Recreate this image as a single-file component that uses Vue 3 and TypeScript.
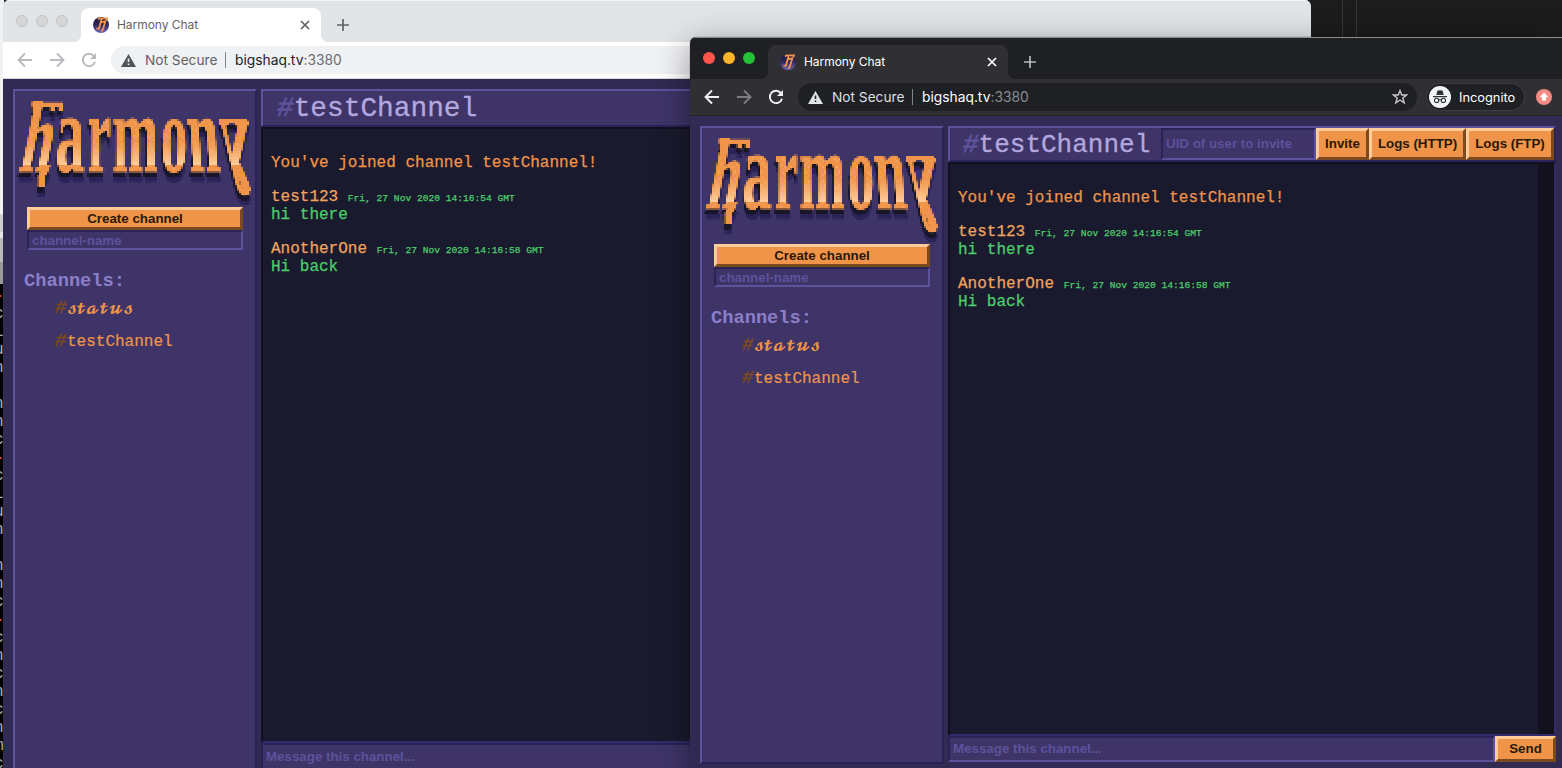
<script setup lang="ts">
interface BrowserWindow {
  id: string
  dark: boolean
}

interface Message {
  author: string
  date: string
  text: string
}

interface LogoLetter {
  char: string
  x: number
  y: number
  size: number
  scale: number
  skew: number
}

const windows: BrowserWindow[] = [
  { id: 'regular', dark: false },
  { id: 'incognito', dark: true },
]

const messages: Message[] = [
  { author: 'test123', date: 'Fri, 27 Nov 2020 14:16:54 GMT', text: 'hi there' },
  { author: 'AnotherOne', date: 'Fri, 27 Nov 2020 14:16:58 GMT', text: 'Hi back' },
]

const channels = ['𝓼𝓽𝓪𝓽𝓾𝓼', 'testChannel']

const letters: LogoLetter[] = [
  { char: 'h', x: 17, y: 171, size: 100, scale: 0.57, skew: -11 },
  { char: 'a', x: 55, y: 171, size: 112, scale: 0.52, skew: 0 },
  { char: 'r', x: 87, y: 171, size: 112, scale: 0.47, skew: 0 },
  { char: 'm', x: 112, y: 171, size: 112, scale: 0.49, skew: 0 },
  { char: 'o', x: 160, y: 171, size: 111, scale: 0.49, skew: 0 },
  { char: 'n', x: 189, y: 171, size: 112, scale: 0.51, skew: 4 },
  { char: 'y', x: 250, y: 171, size: 110, scale: -0.56, skew: 1 },
]

const terminal = [
  '-', 'c', 'L', 'u', 'n', '', 'n', 'n', 'c',
  '-', 'c', 'L', 'u', 'n', '', 'n', 'n', 'c',
  '-', 'c', 'n', 'c', 'n', 'c', 'n', 'm', 'c',
]

function letterTransform(l: LogoLetter): string {
  return `translate(0 ${l.y}) skewX(${l.skew}) scale(${l.scale} 1) translate(0 ${-l.y})`
}
</script>

<template>
  <div class="desktop">
    <div class="backdrop">
      <div class="terminal">
        <span v-for="(t, i) in terminal" :key="i" :class="{ red: t === '-' }">{{ t }}</span>
      </div>
      <div class="editor"></div>
    </div>

    <section v-for="w in windows" :key="w.id" class="window" :class="[w.id, { dark: w.dark }]">
      <div class="tabstrip">
        <div class="lights"><i class="close"></i><i class="min"></i><i class="max"></i></div>
        <div class="tab">
          <svg class="favicon" viewBox="0 0 16 16">
            <defs>
              <linearGradient id="fav" x1="0" y1="0" x2="0" y2="1">
                <stop offset="0" stop-color="#1c1838" />
                <stop offset="0.5" stop-color="#30275f" />
                <stop offset="1" stop-color="#7468b8" />
              </linearGradient>
            </defs>
            <circle cx="8" cy="8" r="8" fill="url(#fav)" />
            <path d="M5 2.6L6.2 1.4H14L13.2 3.2M8.6 2L6 11.6H3.4M7.6 5.6L12.4 4.2L10 12L8.4 14.4" fill="none" stroke="#ef9448" stroke-width="1.8" />
          </svg>
          <span class="tabname">Harmony Chat</span>
          <svg class="x" viewBox="0 0 10 10"><path d="M1 1L9 9M9 1L1 9" /></svg>
        </div>
        <svg class="plus" viewBox="0 0 12 12"><path d="M6 0V12M0 6H12" /></svg>
      </div>
      <div class="toolbar">
        <svg class="nav back" viewBox="0 0 16 16"><path d="M15 8H2M8 1.5L1.5 8L8 14.5" /></svg>
        <svg class="nav fwd" viewBox="0 0 16 16"><path d="M1 8H14M8 1.5L14.5 8L8 14.5" /></svg>
        <svg class="nav reload" viewBox="0 0 16 16">
          <path d="M13.2 4.4A6.2 6.2 0 1 0 14 9.7" />
          <path class="solid" d="M15 1V7H9Z" />
        </svg>
        <div class="omnibox">
          <svg class="warn" viewBox="0 0 15 13">
            <path d="M7.5 0L15 13H0Z" /><path class="mark" d="M7.5 4.6V8M7.5 9.4V11.1" />
          </svg>
          <span class="secure">Not Secure</span>
          <span class="bar"></span>
          <span class="url"><b>bigshaq.tv</b>:3380</span>
          <svg v-if="w.dark" class="star" viewBox="0 0 16 16">
            <path d="M8 1.6L9.8 6H14.6L10.8 9L12.2 13.8L8 11L3.8 13.8L5.2 9L1.4 6H6.2Z" />
          </svg>
        </div>
        <template v-if="w.dark">
          <div class="chip">
            <svg viewBox="0 0 22 22">
              <circle cx="11" cy="11" r="11" fill="#f1f3f4" />
              <path d="M7.2 9L8.5 4.6Q9 4 11 4.6Q13 4 13.5 4.6L14.8 9Z" fill="#303134" />
              <path d="M4 10.7H18" stroke="#303134" stroke-width="1.3" />
              <g fill="none" stroke="#303134" stroke-width="1.1">
                <circle cx="7.6" cy="14.4" r="2.1" /><circle cx="14.4" cy="14.4" r="2.1" />
                <path d="M9.7 14.1Q11 13.4 12.3 14.1" />
              </g>
            </svg>
            <span>Incognito</span>
          </div>
          <svg class="update" viewBox="0 0 16 16">
            <circle cx="8" cy="8" r="8" fill="#f28b82" />
            <path d="M8 3.4L12.4 8.2H10V11.6H6V8.2H3.6Z" fill="#fff" />
          </svg>
        </template>
      </div>

      <div class="app">
        <aside class="sidebar">
          <svg class="logo" viewBox="15 91 240 116" width="240" height="116">
            <defs>
              <filter id="mosaic" filterUnits="userSpaceOnUse" x="15" y="91" width="240" height="116" color-interpolation-filters="sRGB">
                <feFlood x="15" y="91" width="1" height="1" flood-color="#000" result="dot" />
                <feOffset in="dot" dx="0" dy="0" x="15" y="91" width="2" height="2" />
                <feTile x="15" y="91" width="240" height="116" result="grid" />
                <feComposite in="SourceGraphic" in2="grid" operator="in" result="a" />
                <feOffset in="a" dx="1" dy="0" result="b" />
                <feMerge result="row"><feMergeNode in="a" /><feMergeNode in="b" /></feMerge>
                <feOffset in="row" dx="0" dy="1" result="c" />
                <feMerge><feMergeNode in="row" /><feMergeNode in="c" /></feMerge>
              </filter>
              <pattern id="grain" patternUnits="userSpaceOnUse" width="14" height="14">
                <rect width="14" height="14" fill="#ef9448" />
                <path d="M2 0h2v2h-2zM8 2h4v2h-4zM0 6h2v4h-2zM6 8h2v2h-2zM10 10h2v2h-2zM4 12h2v2h-2z" fill="#f6a661" />
              </pattern>
              <linearGradient id="glow" gradientUnits="userSpaceOnUse" x1="0" y1="130" x2="0" y2="172">
                <stop offset="0.25" stop-color="#ffcb98" stop-opacity="0" />
                <stop offset="0.55" stop-color="#ffcb98" stop-opacity="0.5" />
                <stop offset="0.8" stop-color="#ffcb98" />
                <stop offset="0.82" stop-color="#ffcb98" stop-opacity="0" />
              </linearGradient>
              <g id="wordmark">
                <text
                  v-for="l in letters"
                  :key="l.char"
                  :x="l.x / l.scale"
                  :y="l.y"
                  :font-size="l.size"
                  :transform="letterTransform(l)"
                  font-family="Liberation Serif, serif"
                  font-weight="700"
                >{{ l.char }}</text>
              </g>
              <g id="ornaments" fill="none">
                <path d="M37 113L34 111V107L37 104H60V110M50 107L54 110" stroke-width="4.5" />
                <path d="M47 164L41 176V187" stroke-width="7" />
                <path d="M236 164L243 180L247 191" stroke-width="8" />
                <path d="M219 121H246" stroke-width="4" />
              </g>
            </defs>
            <g filter="url(#mosaic)">
              <g transform="translate(0 10)" fill="#2b2358" stroke="#2b2358"><use href="#wordmark" stroke-width="1" /><use href="#ornaments" /></g>
              <g transform="translate(-1 5)" fill="#181629" stroke="#181629"><use href="#wordmark" stroke-width="1" /><use href="#ornaments" /></g>
              <g fill="url(#grain)" stroke="#ef9448"><use href="#wordmark" stroke-width="1" /><use href="#ornaments" /></g>
              <use href="#wordmark" fill="url(#glow)" />
            </g>
          </svg>
          <button class="btn create">Create channel</button>
          <input class="field name" placeholder="channel-name" />
          <h3>Channels:</h3>
          <ul>
            <li v-for="(c, i) in channels" :key="c"><i>#</i><span :class="{ script: i === 0 }">{{ c }}</span></li>
          </ul>
        </aside>
        <main>
          <header>
            <h1><i>#</i>testChannel</h1>
            <template v-if="w.dark">
              <input class="field uid" placeholder="UID of user to invite" />
              <button class="btn invite">Invite</button>
              <button class="btn http">Logs (HTTP)</button>
              <button class="btn ftp">Logs (FTP)</button>
            </template>
          </header>
          <div class="messages">
            <div class="log">
              <p class="joined">You've joined channel testChannel!</p>
              <div v-for="m in messages" :key="m.author" class="message">
                <div class="by">{{ m.author }} <time>{{ m.date }}</time></div>
                <div class="said">{{ m.text }}</div>
              </div>
            </div>
            <div v-if="w.dark" class="scroll"></div>
          </div>
          <footer>
            <input class="field say" placeholder="Message this channel..." />
            <button v-if="w.dark" class="btn send">Send</button>
          </footer>
        </main>
      </div>
    </section>
  </div>
</template>

<style>
body { margin: 0; overflow: hidden; }
</style>

<style scoped>
* { box-sizing: border-box; }
.desktop { position: relative; width: 1562px; height: 768px; overflow: hidden; background: #1c1c1c; }
.backdrop { display: flex; height: 768px; }
.terminal {
  width: 4px; height: 768px; padding-top: 287px; overflow: hidden;
  background: linear-gradient(#f1f1f1 0 214px, #cfcfcf 214px 232px, #e6e6e6 232px 238px, #b9b9b9 238px 262px, #999 262px 284px, #000 284px);
  font: 16px/18px "Liberation Mono", monospace; color: #b0b0b0;
}
.terminal span { display: block; height: 18px; margin-left: -6px; }
.terminal .red { color: #f0524f; font-weight: 700; }
.editor { width: 15px; height: 38px; margin-left: 1338px; border: solid #383838; border-width: 0 1px; }

.window {
  position: absolute; display: flex; flex-direction: column; overflow: hidden;
  border-radius: 6px 6px 0 0; font-family: Inter, sans-serif; color: #5f6368;
}
.regular { left: 3px; top: 0; width: 1308px; height: 776px; }
.incognito {
  left: 690px; top: 37px; width: 872px; height: 731px; border-radius: 6px 0 0 0;
  box-shadow: 0 8px 34px rgba(0, 0, 0, .4), 0 0 1px rgba(0, 0, 0, .8);
}
.tabstrip { display: flex; flex: none; height: 42px; background: #e1e5e8; border-top: 1px solid #f2f5f7; }
.dark .tabstrip { background: #1f2024; border-top-color: #8b8d8f; }
.lights { display: flex; gap: 8px; padding: 14px 0 0 13px; width: 78px; }
.lights i { width: 12px; height: 12px; border-radius: 50%; background: #d5d5d5; border: 1px solid #c3c3c3; }
.dark .lights i { border: 0; }
.dark .close { background: #ff544d; }
.dark .min { background: #ffb429; }
.dark .max { background: #24c138; }
.tab {
  position: relative; display: flex; align-items: center; width: 240px; height: 34px; margin-top: 7px;
  padding: 0 11px 1px 12px; background: #fff; border-radius: 8px 8px 0 0;
}
.tab::before, .tab::after { content: ""; position: absolute; bottom: 0; width: 8px; height: 8px; }
.tab::before { left: -8px; background: radial-gradient(circle at 0 0, transparent 8px, #fff 8.5px); }
.tab::after { right: -8px; background: radial-gradient(circle at 100% 0, transparent 8px, #fff 8.5px); }
.dark .tab { background: #303034; color: #fff; }
.dark .tab::before { background: radial-gradient(circle at 0 0, transparent 8px, #303034 8.5px); }
.dark .tab::after { background: radial-gradient(circle at 100% 0, transparent 8px, #303034 8.5px); }
.favicon { width: 16px; height: 16px; }
.tabname { flex: 1; margin-left: 8px; font-size: 12px; letter-spacing: -.05px; white-space: nowrap; }
.x { width: 10px; height: 10px; }
.x path, .plus path { fill: none; stroke: #5f6368; stroke-width: 1.7; }
.dark .x path { stroke: #fff; }
.dark .plus path { stroke: #b8babd; }
.plus { width: 12px; height: 12px; margin: 18px 0 0 16px; }
.toolbar { display: flex; align-items: center; flex: none; height: 37px; padding-left: 14px; background: #fff; border-bottom: 1px solid #d7d9dc; }
.dark .toolbar { background: #303034; border-color: #242427; padding-right: 10px; }
.nav { flex: none; width: 16px; height: 16px; margin-right: 16px; fill: none; stroke: #b9bbbe; stroke-width: 1.9; }
.nav .solid { fill: #b9bbbe; stroke: none; }
.dark .nav { stroke: #f1f1f1; }
.dark .nav .solid { fill: #f1f1f1; }
.dark .fwd { stroke: #7d7e81; }
.reload { margin-right: 14px; }
.omnibox {
  display: flex; align-items: center; flex: 1; height: 28px; margin-right: 9px; padding: 0 9px 0 10px;
  border-radius: 14px; background: #f0f1f3; font-size: 14px; color: #5f6368; white-space: nowrap;
}
.dark .omnibox { background: #1f2023; color: #dedfe1; }
.warn { width: 15px; height: 13px; fill: #505357; }
.warn .mark { stroke: #f0f1f3; stroke-width: 1.6; }
.dark .warn { fill: #e3e4e6; }
.dark .warn .mark { stroke: #1f2023; }
.secure { width: 80px; margin-left: 9px; font-size: 13.7px; }
.bar { width: 1px; height: 16px; background: #808387; }
.url { flex: 1; margin-left: 9px; font-size: 13.8px; color: #6a6d71; }
.url b { font-weight: 400; color: #202124; }
.dark .url { color: #8a8c90; }
.dark .url b { color: #fff; }
.star { width: 16px; height: 16px; fill: none; stroke: #c6c7c9; stroke-width: 1.4; }
.chip {
  display: flex; align-items: center; gap: 8px; width: 99px; height: 28px; padding-left: 2px; margin-right: 11px;
  border: 1px solid #3d3e41; border-radius: 14px; background: #1f2023; color: #fff; font-size: 12.8px;
}
.chip svg { width: 22px; height: 22px; flex: none; }
.update { width: 16px; height: 16px; flex: none; }

.app { display: flex; gap: 4px; flex: 1; min-height: 0; padding: 10px 6px 6px 10px; background: #312a52; font-family: "Liberation Mono", monospace; }
.sidebar {
  display: flex; flex-direction: column; flex: none; width: 244px; margin-bottom: -2px; background: #3e3468;
  border: 2px solid; border-color: #5d529b #2b2358 #2b2358 #5d529b;
}
.logo { flex: none; display: block; }
.btn {
  padding: 0; border: 3px solid; border-color: #ffcb98 #7b4a1f #7b4a1f #ffcb98; background: #ef9448;
  color: #2c1807; font: bold 13.33px "Liberation Sans", Arial, sans-serif;
}
.field {
  min-width: 0; padding: 0 3px; border: 2px solid; border-color: #2b2358 #5d529b #5d529b #2b2358; outline: 0;
  border-radius: 0; background: #3e3468; font: bold 13.33px "Liberation Sans", Arial, sans-serif;
}
.field::placeholder { color: #5d529b; opacity: 1; }
.create { height: 23px; margin: 0 12px; }
.name { height: 20px; margin: 0 12px; }
h3 { margin: 21px 0 0 9px; font-size: 18.72px; line-height: 21px; color: #8c7fc9; }
ul { margin: 7px 0 0 40px; padding: 0; list-style: none; color: #ef9448; }
li { height: 18px; margin-bottom: 15px; font-size: 16px; line-height: 18px; white-space: nowrap; -webkit-text-stroke: .2px; }
li i { display: inline-block; width: 12px; font-size: 19px; color: #7b4a1f; -webkit-text-stroke: .5px; }
li .script {
  display: inline-block; height: 18px; font-family: "DejaVu Math TeX Gyre", "DejaVu Serif", serif;
  font-size: 14px; letter-spacing: -.5px; -webkit-text-stroke: 0;
}
main { display: flex; flex-direction: column; flex: 1; min-width: 0; }
header {
  display: flex; flex: none; height: 38px; padding-left: 14px; background: #3e3468;
  border: 2px solid; border-color: #5d529b #2b2358 #2b2358 #5d529b;
}
.dark header { height: 36px; padding-left: 13px; }
h1 { margin: 0; font-weight: 400; font-size: 27.8px; line-height: 36px; color: #b3a7df; -webkit-text-stroke: .3px; }
h1 i { color: #5d529b; -webkit-text-stroke: .8px; }
.dark h1 { width: 198px; font-size: 26px; line-height: 34px; }
.uid { flex: 1; padding-bottom: 2px; }
.invite { width: 53px; }
.http { width: 97px; }
.ftp { width: 88px; }
header .btn { padding-bottom: 1px; }
.messages {
  display: flex; flex: 1; min-height: 0; background: #1a1a2e;
  border: 2px solid; border-color: #12101e #302c6b #302c6b #12101e;
}
.log { flex: 1; padding: 25px 8px 0; font-size: 16px; line-height: 18px; -webkit-text-stroke: .25px; }
.joined { margin: 0 0 16px; color: #ef9448; }
.message { margin-bottom: 16px; color: #4cce6c; }
.by { height: 18px; color: #f0a35e; }
time { font-size: 9.6px; color: #4cce6c; }
.scroll { width: 16px; background: #13111e; }
footer { display: flex; flex: none; height: 27px; }
.dark footer { height: 26px; }
.say { flex: 1; }
.dark .say { padding-bottom: 2px; }
.send { width: 61px; padding-bottom: 1px; }
</style>
